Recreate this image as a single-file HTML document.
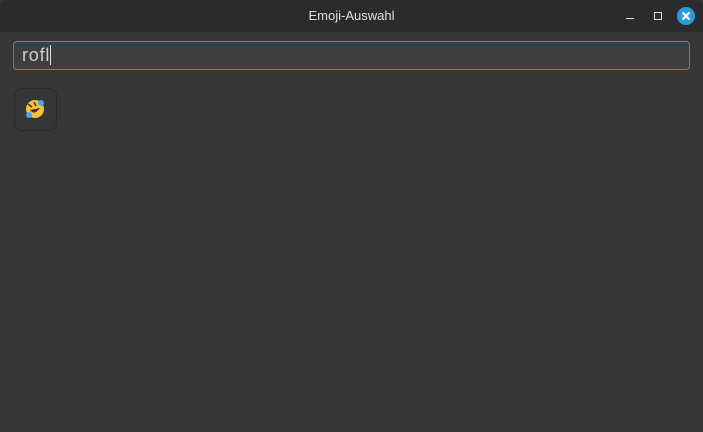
<!DOCTYPE html>
<html><head><style>
html,body{margin:0;padding:0;width:703px;height:432px;overflow:hidden;background:#373737;font-family:"Liberation Sans",sans-serif;}
.tb{position:absolute;left:0;top:0;width:703px;height:32px;background:#2b2b2b;border-radius:6px 6px 0 0;}
.title{position:absolute;top:0;left:0;width:703px;line-height:32px;text-align:center;color:#e0e0e0;font-size:13px;}
.inp{position:absolute;left:13px;top:41px;width:675px;height:27px;border:1px solid #3d8fc4;border-radius:4px;background:#3e3e3e;}
.txt{position:absolute;left:8px;top:3px;color:#cfcfcf;font-size:18px;letter-spacing:0.8px;}
.cur{display:inline-block;width:1px;height:20px;background:#ddd;vertical-align:-4px;}
.btn{position:absolute;left:14px;top:88px;width:41px;height:41px;border:1px solid #2c2c2c;border-radius:8px;background:#363636;}
</style></head><body>
<div class="tb"><div class="title">Emoji-Auswahl</div>
<div style="position:absolute;left:626px;top:18px;width:8px;height:1px;background:#ddd"></div>
<div style="position:absolute;left:654px;top:12px;width:6px;height:6px;border:1px solid #ddd"></div>
<div style="position:absolute;left:677px;top:7px;width:18px;height:18px;border-radius:50%;background:#2a9ae0"></div>
<svg style="position:absolute;left:677px;top:7px" width="18" height="18"><path d="M5.5 5.5L12.5 12.5M12.5 5.5L5.5 12.5" stroke="#fff" stroke-width="2.2"/></svg>
</div>
<div class="inp"><div class="txt">rofl<span class="cur"></span></div></div>
<div class="btn"><svg style="position:absolute;left:9px;top:9px" width="22" height="22" viewBox="0 0 22 22">
<circle cx="11" cy="11" r="9" fill="#f7c23c"/>
<path d="M6 12 Q10 18 16 10" fill="#5a2a1a"/>
<path d="M4 6 L8 9 M10 4 L12 8" stroke="#333" stroke-width="1.5"/>
<circle cx="17" cy="5" r="3" fill="#4aa8e8"/><circle cx="5" cy="17" r="3" fill="#4aa8e8"/>
</svg></div>
</body></html>
